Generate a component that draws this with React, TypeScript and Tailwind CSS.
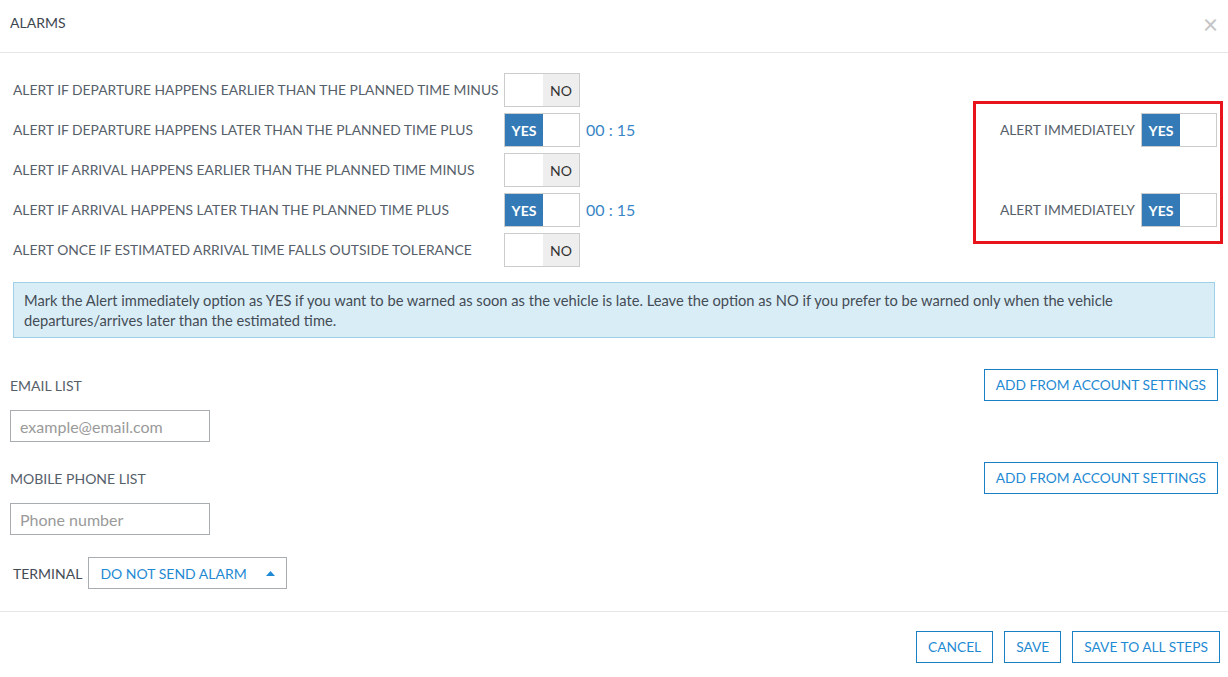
// ============================================================
// SECTION: Alarms dialog
// ============================================================

function Toggle({ on }: { on: boolean }) {
  return (
    <div className="flex h-[34px] w-[76px] border border-[#cccccc] bg-white text-[14px]">
      {on ? (
        <>
          <div className="flex w-[38px] items-center justify-center bg-[#337ab7] font-bold text-white">YES</div>
          <div className="flex-1" />
        </>
      ) : (
        <>
          <div className="flex-1" />
          <div className="flex w-[36px] items-center justify-center bg-[#eeeeee] text-[#333333]">NO</div>
        </>
      )}
    </div>
  )
}

const rows = [
  { label: 'ALERT IF DEPARTURE HAPPENS EARLIER THAN THE PLANNED TIME MINUS', on: false, time: false, immediate: false },
  { label: 'ALERT IF DEPARTURE HAPPENS LATER THAN THE PLANNED TIME PLUS', on: true, time: true, immediate: true },
  { label: 'ALERT IF ARRIVAL HAPPENS EARLIER THAN THE PLANNED TIME MINUS', on: false, time: false, immediate: false },
  { label: 'ALERT IF ARRIVAL HAPPENS LATER THAN THE PLANNED TIME PLUS', on: true, time: true, immediate: true },
  { label: 'ALERT ONCE IF ESTIMATED ARRIVAL TIME FALLS OUTSIDE TOLERANCE', on: false, time: false, immediate: false },
]

function OutlineButton({ children }: { children: string }) {
  return (
    <button className="h-8 border border-[#1a7fc4] bg-white px-[11px] text-[13.75px] text-[#1f8ad3]">
      {children}
    </button>
  )
}

export default function App() {
  return (
    <div className="relative h-[677px] w-full overflow-hidden bg-white text-[#56606a]" style={{ fontFamily: 'Lato, "Open Sans", sans-serif' }}>

      {/* ── Header ──────────────────────────────────── */}
      <div className="flex h-[53px] items-start justify-between border-b border-[#e5e5e5] pl-[10px] pr-[10px]">
        <div className="pt-[12px] text-[14px] text-[#3d4650]">ALARMS</div>
        <div className="pt-[11px] text-[26px] leading-none text-[#c4c4c4]">×</div>
      </div>

      {/* ── Alert rows ──────────────────────────────── */}
      <div className="pt-[17px]">
        {rows.map((r, i) => (
          <div key={i} className="flex h-10 items-center pl-[13px] pr-[11px]">
            <div className="w-[491px] shrink-0 whitespace-nowrap text-[13.85px]">{r.label}</div>
            <Toggle on={r.on} />
            {r.time && <div className="ml-[6px] text-[16px] text-[#3a86c6]">00 : 15</div>}
            <div className="flex-1" />
            {r.immediate && (
              <div className="flex items-center">
                <span className="mr-[6px] text-[13.85px]">ALERT IMMEDIATELY</span>
                <Toggle on />
              </div>
            )}
          </div>
        ))}
      </div>

      {/* ── Highlight annotation ────────────────────── */}
      <div className="absolute left-[973px] top-[101px] h-[143px] w-[250px] border-[3px] border-[#e8141c]" />

      {/* ── Info box ────────────────────────────────── */}
      <div className="mx-[13px] mt-[12px] border border-[#9fd0ea] bg-[#d9edf7] px-[10px] py-[7px] text-[14.7px] leading-[20px] text-[#444c55]">
        Mark the Alert immediately option as YES if you want to be warned as soon as the vehicle is late. Leave the option as NO if you prefer to be warned only when the vehicle departures/arrives later than the estimated time.
      </div>

      {/* ── Contacts ────────────────────────────────── */}
      <div className="px-[10px]">
        <div className="mt-[31px] flex items-center justify-between">
          <span className="text-[14px]">EMAIL LIST</span>
          <OutlineButton>ADD FROM ACCOUNT SETTINGS</OutlineButton>
        </div>
        <input
          placeholder="example@email.com"
          className="mt-[9px] h-8 w-[200px] border border-[#a9adb2] px-[9px] text-[16px] outline-none placeholder:text-[#9a9a9a]"
        />
        <div className="mt-[20px] flex items-center justify-between">
          <span className="text-[14px]">MOBILE PHONE LIST</span>
          <OutlineButton>ADD FROM ACCOUNT SETTINGS</OutlineButton>
        </div>
        <input
          placeholder="Phone number"
          className="mt-[9px] h-8 w-[200px] border border-[#a9adb2] px-[9px] text-[16px] outline-none placeholder:text-[#9a9a9a]"
        />
        <div className="mt-[22px] flex items-center pl-[3px]">
          <span className="mr-[6px] text-[14px] text-[#444c55]">TERMINAL</span>
          <div className="flex h-8 w-[199px] items-center justify-between border border-[#a9adb2] pl-[11px] pr-[11px] text-[14px] text-[#1f8ad3]">
            <span>DO NOT SEND ALARM</span>
            <svg width="9" height="5" viewBox="0 0 9 5"><path d="M0 5 L4.5 0 L9 5 Z" fill="#1f8ad3" /></svg>
          </div>
        </div>
      </div>

      {/* ── Footer ──────────────────────────────────── */}
      <div className="mt-[22px] flex justify-end gap-[11px] border-t border-[#e5e5e5] pr-[8px] pt-[19px]">
        <OutlineButton>CANCEL</OutlineButton>
        <OutlineButton>SAVE</OutlineButton>
        <OutlineButton>SAVE TO ALL STEPS</OutlineButton>
      </div>
    </div>
  )
}
